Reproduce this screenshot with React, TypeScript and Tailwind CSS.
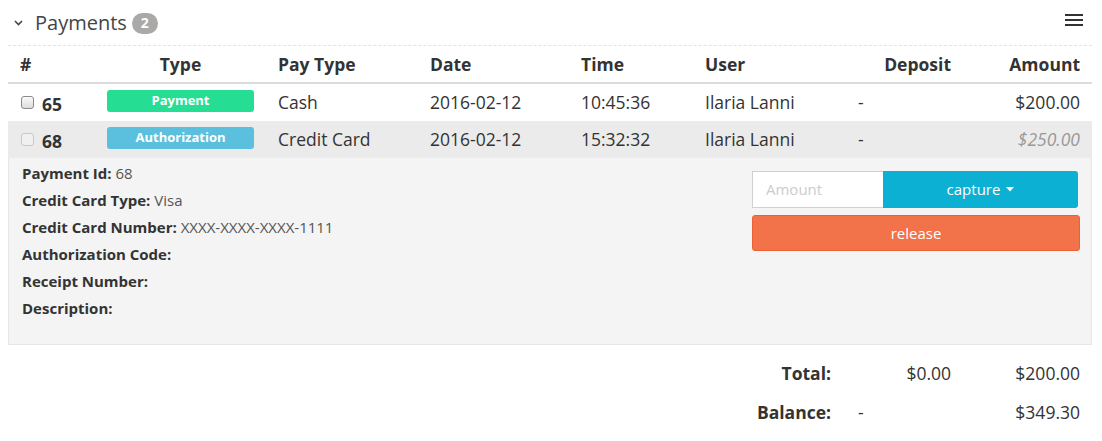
import React from "react";

const cols = "grid grid-cols-[91px_171px_152px_151px_124px_153px_110px_132px]";

function Checkbox({ disabled }: { disabled?: boolean }) {
  return (
    <span
      className={
        "inline-block w-[13px] h-[13px] rounded-[3px] border " +
        (disabled
          ? "border-[#c8c8c8] bg-[#f0f0f0]"
          : "border-[#8a8a8a] bg-gradient-to-b from-[#fafafa] to-[#dcdcdc]")
      }
    />
  );
}

export default function App() {
  return (
    <div
      className="w-[1102px] h-[441px] bg-white text-[#333] overflow-hidden"
      style={{ fontFamily: '"Open Sans", sans-serif' }}
    >
      {/* Title bar */}
      <div className="ml-2 w-[1084px] h-[40px] flex items-center justify-between border-b border-dashed border-[#e3e3e3] mt-[6px]">
        <div className="flex items-center mb-[5px]">
          <svg className="ml-[6px] mr-[12px]" width="9" height="6" viewBox="0 0 9 6">
            <path d="M1 1 L4.5 4.5 L8 1" stroke="#444" strokeWidth="1.6" fill="none" />
          </svg>
          <span className="text-[20px] leading-none text-[#444]">Payments</span>
          <span className="ml-[5px] inline-flex items-center justify-center w-[26px] h-[21px] rounded-full bg-[#a9a9a9] text-white text-[14px] font-bold leading-none">
            2
          </span>
        </div>
        <svg className="mr-[9px] mb-[11px]" width="18" height="12" viewBox="0 0 18 12">
          <rect x="0" y="0" width="18" height="2" fill="#333" />
          <rect x="0" y="5" width="18" height="2" fill="#333" />
          <rect x="0" y="10" width="18" height="2" fill="#333" />
        </svg>
      </div>

      <div className="ml-2 w-[1084px]">
        {/* Header row */}
        <div className={cols + " h-[38px] items-center font-bold text-[17.5px] border-b-2 border-[#dcdcdc]"}>
          <div className="pl-3">#</div>
          <div className="pl-2">
            <div className="w-[147px] text-center">Type</div>
          </div>
          <div className="pl-2">Pay Type</div>
          <div className="pl-2">Date</div>
          <div className="pl-2">Time</div>
          <div className="pl-2">User</div>
          <div className="pr-[9px] text-right">Deposit</div>
          <div className="pr-3 text-right">Amount</div>
        </div>

        {/* Row 1 */}
        <div className={cols + " h-[37px] items-center text-[17.5px]"}>
          <div className="pl-[13px] flex items-center">
            <Checkbox />
            <span className="ml-[8px] font-bold mt-[3px]">65</span>
          </div>
          <div className="pl-2">
            <div className="w-[147px] h-[22px] mb-[4px] rounded-[3px] bg-[#25de93] text-white text-[13px] font-bold flex items-center justify-center">
              Payment
            </div>
          </div>
          <div className="pl-2">Cash</div>
          <div className="pl-2">2016-02-12</div>
          <div className="pl-2">10:45:36</div>
          <div className="pl-2">Ilaria Lanni</div>
          <div className="pl-2">-</div>
          <div className="pr-3 text-right">$200.00</div>
        </div>

        {/* Row 2 */}
        <div className={cols + " h-[37px] items-center text-[17.5px] bg-[#ebebeb]"}>
          <div className="pl-[13px] flex items-center">
            <Checkbox disabled />
            <span className="ml-[8px] font-bold mt-[3px]">68</span>
          </div>
          <div className="pl-2">
            <div className="w-[147px] h-[22px] mb-[4px] rounded-[3px] bg-[#5bc0de] text-white text-[13px] font-bold flex items-center justify-center">
              Authorization
            </div>
          </div>
          <div className="pl-2">Credit Card</div>
          <div className="pl-2">2016-02-12</div>
          <div className="pl-2">15:32:32</div>
          <div className="pl-2">Ilaria Lanni</div>
          <div className="pl-2">-</div>
          <div className="pr-3 text-right italic text-[#999]">$250.00</div>
        </div>

        {/* Details panel */}
        <div className="h-[187px] bg-[#f4f4f4] border border-t-0 border-[#e6e6e6] flex justify-between">
          <div className="pl-[13px] pt-[2px] text-[15px] leading-[27px]">
            <div><b>Payment Id:</b> <span className="text-[#555]">68</span></div>
            <div><b>Credit Card Type:</b> <span className="text-[#555]">Visa</span></div>
            <div><b>Credit Card Number:</b> <span className="text-[#555]">XXXX-XXXX-XXXX-1111</span></div>
            <div><b>Authorization Code:</b></div>
            <div><b>Receipt Number:</b></div>
            <div><b>Description:</b></div>
          </div>
          <div className="w-[328px] mr-[11px] mt-[13px] flex flex-col gap-[7px]">
            <div className="flex h-[37px]">
              <div className="w-[131px] h-full bg-white border border-[#d0d0d0] border-r-0 flex items-center pl-[13px] text-[15px] text-[#cccccc]">
                Amount
              </div>
              <div className="w-[195px] h-full bg-[#0bb0d3] rounded-r-[3px] text-white text-[15px] flex items-center justify-center gap-[6px]">
                capture
                <svg width="8" height="5" viewBox="0 0 8 5">
                  <path d="M0 0 L8 0 L4 4.5 Z" fill="#fff" />
                </svg>
              </div>
            </div>
            <div className="h-[36px] bg-[#f2724a] border border-[#ee5f33] rounded-[3px] text-white text-[15px] flex items-center justify-center">
              release
            </div>
          </div>
        </div>

        {/* Totals */}
        <div className={cols + " h-[39px] mt-[9px] items-center text-[17.5px]"}>
          <div />
          <div />
          <div />
          <div />
          <div />
          <div className="pr-[19px] text-right font-bold">Total:</div>
          <div className="pr-[9px] text-right">$0.00</div>
          <div className="pr-3 text-right">$200.00</div>
        </div>
        <div className={cols + " h-[39px] items-center text-[17.5px]"}>
          <div />
          <div />
          <div />
          <div />
          <div />
          <div className="pr-[19px] text-right font-bold">Balance:</div>
          <div className="pl-2">-</div>
          <div className="pr-3 text-right">$349.30</div>
        </div>
      </div>
    </div>
  );
}
